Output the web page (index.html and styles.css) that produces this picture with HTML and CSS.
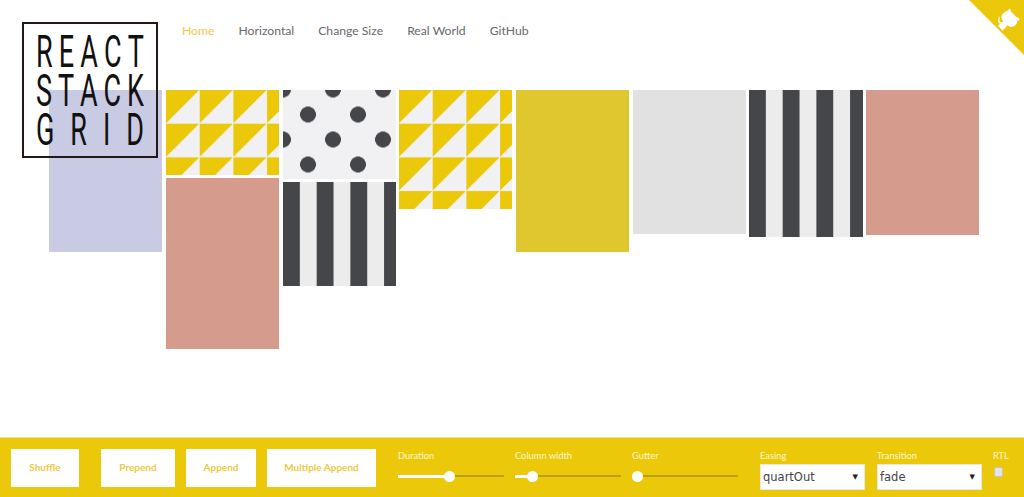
FILE: index.html
```html
<!DOCTYPE html>
<html lang="en">
<head>
  <meta charset="UTF-8" />
  <title>React Stack Grid</title>
  <link rel="stylesheet" href="styles.css">
</head>
<body>

  <div class="logo">
    <div class="logo-row"><span>R</span><span>E</span><span>A</span><span>C</span><span>T</span></div>
    <div class="logo-row"><span>S</span><span>T</span><span>A</span><span>C</span><span>K</span></div>
    <div class="logo-row"><span>G</span><span>R</span><span>I</span><span>D</span></div>
  </div>

  <nav class="nav">
    <a class="nav-link active" href="#">Home</a>
    <a class="nav-link" href="#">Horizontal</a>
    <a class="nav-link" href="#">Change Size</a>
    <a class="nav-link" href="#">Real World</a>
    <a class="nav-link" href="#">GitHub</a>
  </nav>

  <a class="corner" href="#" aria-label="GitHub">
    <svg width="55" height="55" viewBox="0 0 250 250">
      <path class="corner-bg" d="M0,0 L250,250 L250,0 Z"></path>
      <g class="corner-octo">
        <path class="corner-cat" d="M128.3,109.0 C113.8,99.7 119.0,89.6 119.0,89.6 C122.0,82.7 120.5,78.6 120.5,78.6 C119.2,72.0 123.4,76.3 123.4,76.3 C127.3,80.9 125.5,87.3 125.5,87.3 C122.9,97.6 130.6,101.9 134.4,103.2"></path>
        <path class="corner-cat" d="M115.0,115.0 C114.9,115.1 118.7,116.5 119.8,115.4 L133.7,101.6 C136.9,99.2 139.9,98.4 142.2,98.6 C133.8,88.0 127.5,74.4 143.8,58.0 C148.5,53.4 154.0,51.2 159.7,51.0 C160.3,49.4 163.2,43.6 171.4,40.1 C171.4,40.1 176.1,42.5 178.8,56.2 C183.1,58.6 187.2,61.8 190.9,65.4 C194.5,69.0 197.7,73.2 200.1,77.6 C213.8,80.2 216.3,84.9 216.3,84.9 C212.7,93.1 206.9,96.0 205.4,96.6 C205.1,102.4 203.0,107.8 198.3,112.5 C181.9,128.9 168.3,122.5 157.7,114.1 C157.9,116.9 156.7,120.9 152.7,124.9 L141.0,136.5 C139.8,137.7 141.6,141.9 141.8,141.8 Z"></path>
      </g>
    </svg>
  </a>

  <main class="grid">
    <div class="grid-col">
      <div class="card lilac" style="height: 162px"></div>
    </div>
    <div class="grid-col">
      <div class="card triangles" style="height: 85px"></div>
      <div class="card salmon" style="height: 171px"></div>
    </div>
    <div class="grid-col">
      <div class="card dots" style="height: 89px"></div>
      <div class="card stripes" style="height: 104px"></div>
    </div>
    <div class="grid-col">
      <div class="card triangles" style="height: 119px"></div>
    </div>
    <div class="grid-col">
      <div class="card mustard" style="height: 162px"></div>
    </div>
    <div class="grid-col">
      <div class="card silver" style="height: 144px"></div>
    </div>
    <div class="grid-col">
      <div class="card stripes" style="height: 147px"></div>
    </div>
    <div class="grid-col">
      <div class="card salmon" style="height: 145px"></div>
    </div>
  </main>

  <footer class="toolbar">
    <button class="btn btn-shuffle">Shuffle</button>
    <button class="btn btn-prepend">Prepend</button>
    <button class="btn btn-append">Append</button>
    <button class="btn btn-multiple">Multiple Append</button>

    <div class="control slider-control">
      <label class="control-label">Duration</label>
      <div class="slider"><div class="slider-fill" style="width: 48%"></div></div>
    </div>
    <div class="control slider-control">
      <label class="control-label">Column width</label>
      <div class="slider"><div class="slider-fill" style="width: 16%"></div></div>
    </div>
    <div class="control slider-control">
      <label class="control-label">Gutter</label>
      <div class="slider"><div class="slider-fill" style="width: 5px"></div></div>
    </div>

    <div class="control select-control easing">
      <label class="control-label">Easing</label>
      <div class="select-wrap">
        <select class="select"><option>quartOut</option></select>
      </div>
    </div>
    <div class="control select-control">
      <label class="control-label">Transition</label>
      <div class="select-wrap">
        <select class="select"><option>fade</option></select>
      </div>
    </div>
    <div class="control rtl">
      <label class="control-label">RTL</label>
      <input class="checkbox" type="checkbox">
    </div>
  </footer>

</body>
</html>
```

FILE: styles.css
```css
html, body {
  height: 100%;
}

body {
  font-family: 'Lato', sans-serif;
  background: #ffffff;
  color: #666;
  margin: 0;
  display: flex;
  flex-direction: column;
  overflow: hidden;
}

/* logo sits over the first grid column */
.logo {
  position: absolute;
  top: 22px;
  left: 22px;
  width: 136px;
  height: 136px;
  box-sizing: border-box;
  border: 2px solid #231815;
  padding: 8px 0 0 12px;
}

.logo-row {
  display: flex;
  justify-content: space-between;
  width: 180px;
  height: 39px;
  font-family: 'Roboto', sans-serif;
  font-size: 45px;
  line-height: 39px;
  color: #111;
  transform: scaleX(0.6);
  transform-origin: left;
}

.nav {
  position: absolute;
  top: 22px;
  left: 182px;
  display: flex;
  gap: 24px;
}

.nav-link {
  font-size: 12.2px;
  line-height: 17px;
  color: #68686e;
  text-decoration: none;
}

.nav-link.active {
  color: #eec94d;
}

.corner {
  position: absolute;
  top: 0;
  right: 0;
  height: 55px;
}

.corner-bg {
  fill: #ecc80a;
}

.corner-octo {
  transform: translate(14px, 0);
}

.corner-cat {
  fill: #ffffff;
}

.grid {
  flex: 1;
  display: flex;
  align-items: flex-start;
  gap: 3.5px;
  padding: 90px 0 0 49.2px;
}

.grid-col {
  width: 113.2px;
  display: flex;
  flex-direction: column;
  gap: 3px;
}

.lilac { background: #c9cae3; }
.salmon { background: #d59c8e; }
.mustard { background: #e0c62f; }
.silver { background: #e1e1e1; }

.triangles {
  background-image: linear-gradient(to bottom right, #ecc80a 50%, #f1f1f3 50%);
  background-size: 33.7px 33.7px;
}

.dots {
  background-color: #f1f1f3;
  background-image:
    radial-gradient(circle, #45464a 7.6px, transparent 8.2px),
    radial-gradient(circle, #45464a 7.6px, transparent 8.2px);
  background-size: 50px 50px;
  background-position: -25px -25.5px, 0 -0.5px;
}

.stripes {
  background-image: linear-gradient(to right, #45464a 50%, #ececec 50%);
  background-size: 33.7px 100%;
}

.toolbar {
  height: 60px;
  box-sizing: border-box;
  flex-shrink: 0;
  display: flex;
  align-items: flex-start;
  background: #ecc80a;
  border-top: 1px solid #f3e27c;
  padding: 11px 0 0 11px;
}

.btn {
  height: 38px;
  padding: 0 0 2px;
  border: none;
  background: #ffffff;
  color: #edc93f;
  font-family: 'Lato', sans-serif;
  font-size: 10px;
  font-weight: bold;
}

.btn-shuffle { width: 68px; margin-right: 22px; }
.btn-prepend { width: 74px; margin-right: 11px; }
.btn-append { width: 70px; margin-right: 11px; }
.btn-multiple { width: 109px; margin-right: 22px; }

.control {
  display: flex;
  flex-direction: column;
}

.control-label {
  font-size: 9.3px;
  line-height: 13px;
  color: #fdf6d0;
}

.slider-control {
  width: 106px;
  margin-right: 11px;
}

.slider {
  position: relative;
  height: 2px;
  margin-top: 13px;
  background: #b9a009;
}

.slider-fill {
  position: relative;
  top: -0.5px;
  height: 3px;
  background: #ffffff;
}

/* handle hangs off the end of the filled part */
.slider-fill::after {
  content: "";
  position: absolute;
  top: -4px;
  right: -6px;
  width: 11px;
  height: 11px;
  border-radius: 50%;
  background: #ffffff;
}

.select-control {
  width: 105px;
  margin-right: 12px;
}

.easing {
  margin-left: 11px;
}

.select-wrap {
  position: relative;
  margin-top: 2px;
}

.select-wrap::after {
  content: "▼";
  position: absolute;
  top: 8px;
  right: 7px;
  font-family: 'DejaVu Sans', sans-serif;
  font-size: 7px;
  line-height: 10px;
  color: #222;
}

.select {
  display: block;
  width: 105px;
  height: 26px;
  box-sizing: border-box;
  appearance: none;
  border: 1px solid #e8e8e8;
  border-radius: 0;
  background: #ffffff;
  padding: 0 0 0 2px;
  font-family: 'DejaVu Sans', sans-serif;
  font-size: 11.5px;
  color: #444;
}

.rtl {
  margin-left: -1px;
}

.checkbox {
  appearance: none;
  width: 9px;
  height: 10px;
  margin: 5px 0 0 1px;
  border: 1px solid #c4c4c4;
  border-radius: 2px;
  background: #e4e4e4;
}
```
